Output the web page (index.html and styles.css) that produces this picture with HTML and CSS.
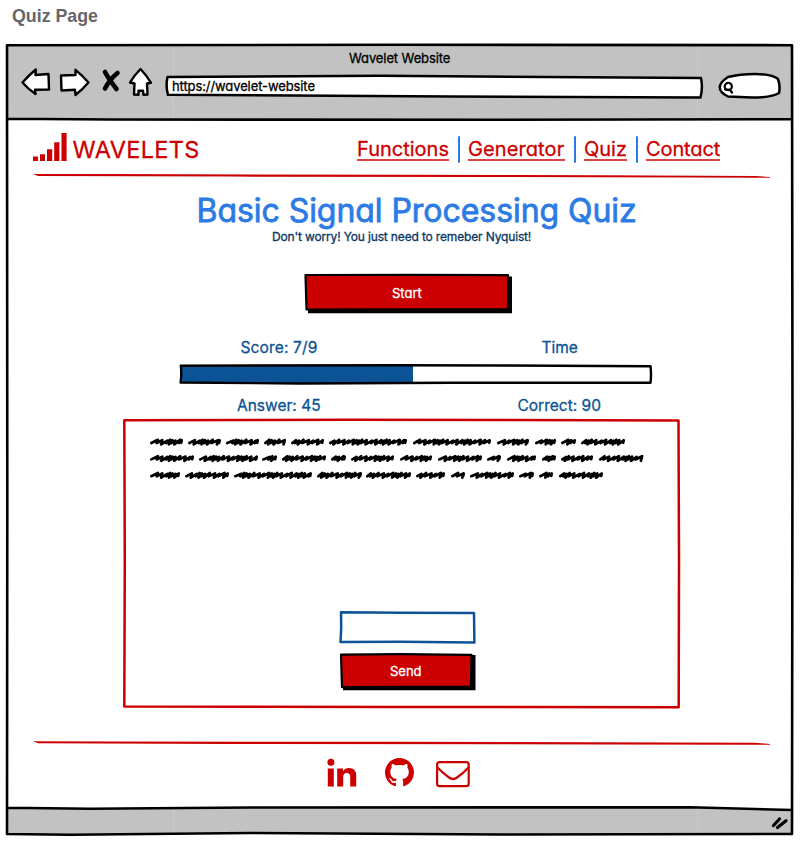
FILE: index.html
```html
<!DOCTYPE html>
<html lang="en">
<head>
<meta charset="utf-8">
<title>Quiz Page</title>
<link rel="stylesheet" href="styles.css">
</head>
<body>
<h2 class="page-label">Quiz Page</h2>
<div class="window">
  <svg class="frame" viewBox="6 44 788 792" aria-hidden="true">
    <path class="chrome" d="M8 45H792V119.500L480 120L8 119ZM8 808L250 808L700 807L792 810V834H8Z"/>
    <path class="seam" d="M173.500 46V118M697.500 46V118M173.500 809V832M697.500 809V832"/>
    <path class="ink" d="M7 45.200L400 44.800L792 45.200L792.500 420L792 834L500 834.500L250 833L70 834.800L7 834L7.300 500ZM7 118.800L110 119.500L480 119.800L792 119.200M7 807.800L90 808.800L250 807.500L690 807.300L792 810"/>
  </svg>
  <header class="chrome-bar">
    <div class="window-title">Wavelet Website</div>
    <div class="toolbar">
      <svg class="tools" viewBox="20 64 136 36" aria-hidden="true">
        <path class="tool" d="M22.500 82.500Q29 75 35.800 69.500L35.500 75L48.500 74L49 89.500L35 89.800L35.500 94Q28 89 22.500 82.500ZM61 75.500L75.500 75L75.500 69.800Q83 76 88.500 82.500Q83 89 75.500 95L75 89.800L61.500 90.500ZM140.500 69Q147 76 151 82.800L147 83.500L147.500 94.500L143.500 94.800L143 90.800L138.500 90.800L138.500 94.800L134 94.500L134.500 83.500L130 82.500Q134.500 75 140.500 69Z"/>
        <path class="cross" d="M105 72Q108 78 116.500 89M117.500 73Q110 79 105 88.500"/>
      </svg>
      <div class="address">
        <svg class="sketch" viewBox="165 75 539 24" aria-hidden="true"><path class="field" d="M167.500 77L380 75.800L701 78Q703 88 700.500 97.500L450 96.500L168 94.800Q165.500 86 167.500 77Z"/></svg>
        <span class="url">https://wavelet-website</span>
      </div>
      <svg class="search" viewBox="718 72 64 28" aria-hidden="true">
        <path class="field" d="M728 77Q740 74 755 74Q772 74 778 79Q780.500 86 779 93Q772 97.500 752 97.500L728 96.500Q711.500 88 728 77Z"/>
        <circle class="lens" cx="728.300" cy="86.500" r="3.600"/><path class="lens" d="M725 89.500L730 89.800L732 92.500"/>
      </svg>
    </div>
  </header>
  <div class="site">
    <div class="masthead">
      <a class="brand">
        <svg class="bars" viewBox="33 132 34 30" aria-hidden="true"><path d="M33 156.500H38V161H33ZM40 154.300H45V161H40ZM47 149.300H52.200V161H47ZM54.200 142.200H59.400V161H54.200ZM61.500 133H66.600V161H61.500Z"/></svg>
        <span class="brand-name">WAVELETS</span>
      </a>
      <nav class="nav">
        <a class="functions">Functions</a><a class="generator">Generator</a><a class="quiz">Quiz</a><a class="contact">Contact</a>
      </nav>
    </div>
    <svg class="rule" viewBox="33 173 738 6" aria-hidden="true"><path d="M33 174L110 174L400 174.800L600 175.300L755 176L770 177V177.800L690 177.500L500 177L230 176.600L38 176Z"/></svg>
    <main class="main">
      <h1 class="heading">Basic Signal Processing Quiz</h1>
      <p class="lead">Don't worry! You just need to remeber Nyquist!</p>
      <button class="button start">
        <svg class="sketch" viewBox="304 273 209 41" aria-hidden="true"><path class="shade" d="M308 276.500H512V313.200H308Z"/><path class="face" d="M305.500 275L410 274.800L508 275.200L508 309L306.500 309.500Z"/></svg>
        <span class="start-text">Start</span>
      </button>
      <div class="stats"><span class="score">Score: 7/9</span><span class="time">Time</span></div>
      <div class="progress">
        <svg class="sketch" viewBox="179 364 473 21" aria-hidden="true"><path class="fill" d="M181 366H413V383H181Z"/><path class="track" d="M180.800 365.700L400 365.300L500 365.500L650.500 366.200Q651.500 375 650.500 382.800L450 382.800L300 383.500L180.600 382.500Q181.800 374 180.800 365.700Z"/></svg>
      </div>
      <div class="stats second"><span class="answer">Answer: 45</span><span class="correct">Correct: 90</span></div>
      <section class="question">
        <svg class="sketch" viewBox="123 418 557 291" aria-hidden="true"><path class="red-line" d="M124.300 420.200L350 419.700L678.500 420.500L679 560L678.700 707.300L400 707L124.300 706.500L124.800 560Z"/><g class="scribble" id="scribble"></g></svg>
        <form class="form">
          <div class="input"><svg class="sketch" viewBox="339 611 137 33" aria-hidden="true"><path class="blue-line" d="M341 612.200L400 612.800L474 613L474.400 642.500L400 641.800L340.500 642L341.200 628Z"/></svg></div>
          <button class="button send" type="button">
            <svg class="sketch" viewBox="339 652 137 39" aria-hidden="true"><path class="shade" d="M343 655H475.500V690.300H343Z"/><path class="face" d="M341 654.600L400 654.200L471.500 654.800L471 686.500L342 687.200Z"/></svg>
            <span class="send-text">Send</span>
          </button>
        </form>
      </section>
    </main>
    <svg class="rule lower" viewBox="33 740 738 6" aria-hidden="true"><path d="M33 741.300L110 741.500L400 741.800L755 742.800L770 744V744.700L600 744.400L230 744L38 743.200Z"/></svg>
    <footer class="social">
      <svg class="linkedin" viewBox="327 758 30 30" aria-hidden="true"><circle cx="330.900" cy="762.300" r="3.500"/><path d="M327.800 768.500H333.800V786.500H327.800ZM337.200 768.500H343V771Q345 768 349 768Q356.200 768 356.200 776V786.500H350.200V777Q350.200 773 346.800 773Q343.200 773 343.200 777V786.500H337.200Z"/></svg>
      <svg class="github" viewBox="0 0 16 16" aria-hidden="true"><path d="M8 0C3.580 0 0 3.580 0 8c0 3.540 2.290 6.530 5.470 7.590.4.070.55-.17.55-.38 0-.19-.01-.82-.01-1.490-2.010.37-2.530-.49-2.690-.94-.09-.23-.48-.94-.82-1.130-.28-.15-.68-.52-.01-.53.63-.01 1.080.58 1.230.82.72 1.210 1.870.87 2.330.66.07-.52.28-.87.51-1.070-1.780-.2-3.640-.89-3.640-3.950 0-.87.31-1.590.82-2.150-.08-.2-.36-1.020.08-2.120 0 0 .67-.21 2.200.82.64-.18 1.320-.27 2-.27s1.360.09 2 .27c1.530-1.040 2.200-.82 2.200-.82.44 1.100.16 1.920.08 2.120.51.56.82 1.270.82 2.150 0 3.070-1.870 3.750-3.650 3.950.29.25.54.73.54 1.480 0 1.070-.01 1.930-.01 2.200 0 .21.15.46.55.38A8.010 8.010 0 0 0 16 8c0-4.420-3.580-8-8-8z"/></svg>
      <svg class="mail" viewBox="435 760 36 28" aria-hidden="true"><rect x="437.100" y="762.200" width="31.600" height="24" rx="2.500"/><path d="M437.500 767.500Q444 774 449 777.500Q453 780.500 457 777.500Q463 773.500 468.500 767.500"/></svg>
    </footer>
  </div>
  <div class="status-bar"><svg class="grip" viewBox="770 814 20 18" aria-hidden="true"><path d="M773.500 825.500L779.500 819M777.500 827.500L786 820.800"/></svg></div>
</div>
<script src="scribble.js"></script>
</body>
</html>
```
FILE: styles.css
```css
* { box-sizing: border-box; }
body { margin: 0; height: 844px; background: #fff; font-family: Inter, "Liberation Sans", sans-serif; font-feature-settings: "cv11"; font-weight: 400; overflow: hidden; }
svg { display: block; overflow: visible; }
path { stroke-linejoin: round; stroke-linecap: round; }
.page-label { margin: 0; padding: 6px 0 0 12px; height: 44px; font: bold 17.800px/20px "Liberation Sans", sans-serif; color: #666; }
.window { position: relative; width: 788px; height: 792px; margin-left: 6px; display: flex; flex-direction: column; -webkit-text-stroke: 0.300px currentColor; }
.frame { position: absolute; inset: 0; width: 788px; height: 792px; }
.chrome { fill: #c2c2c2; }
.seam { stroke: #cacaca; stroke-width: 1; }
.ink { fill: none; stroke: #000; stroke-width: 2.600; }
.chrome-bar, .site, .status-bar { position: relative; }
.chrome-bar { height: 76px; padding-top: 4px; color: #000; }
.window-title { height: 16px; line-height: 20px; padding-left: 343px; font-size: 13px; letter-spacing: -0.100px; white-space: nowrap; }
.toolbar { display: flex; padding-left: 14px; }
.tools { width: 136px; height: 36px; }
.tool { fill: #fff; stroke: #000; stroke-width: 2.400; }
.cross { fill: none; stroke: #000; stroke-width: 4.600; }
.field { fill: #fff; stroke: #000; stroke-width: 2.500; }
.address { display: grid; width: 539px; height: 24px; margin: 11px 14px 0 9px; }
.address > *, .button > * { grid-area: 1 / 1; }
.sketch { width: 100%; height: 100%; }
.url { position: relative; padding-left: 7px; font-size: 13px; line-height: 22px; letter-spacing: -0.100px; }
.search { width: 64px; height: 28px; margin-top: 8px; }
.lens { fill: none; stroke: #000; stroke-width: 2.200; }
.site { height: 688px; padding: 12px 24px 0 27px; }
.masthead { display: flex; height: 41px; color: #c00; }
.brand { display: flex; width: 324px; }
.bars { width: 34px; height: 30px; fill: #c00; }
.brand-name { margin-left: 5.500px; font-size: 23.500px; line-height: 35px; letter-spacing: 0.350px; }
.nav { display: flex; height: 32px; padding-top: 4px; font-size: 20px; line-height: 26px; }
.nav a { display: block; height: 25px; margin-right: 19px; border-bottom: 2px solid #da4545; position: relative; white-space: nowrap; }
.nav a + a::before { content: ""; position: absolute; left: -10px; top: 0; width: 2px; height: 27px; border-radius: 1px; background: #2c7be5; }
.functions { width: 92px; }
.generator { width: 97px; letter-spacing: 0.100px; }
.quiz { width: 43px; }
.contact { width: 74px; letter-spacing: -0.100px; }
.rule { width: 738px; height: 6px; fill: #c00; }
.main { height: 561px; display: flex; flex-direction: column; }
.heading { margin: 10px 0 0 163.500px; font-size: 32px; font-weight: 400; line-height: 44px; height: 38px; color: #2c7be5; white-space: nowrap; letter-spacing: -0.050px; -webkit-text-stroke-width: 0.800px; }
.lead { margin: 0 0 0 239px; height: 46px; line-height: 20px; font-size: 12px; letter-spacing: -0.150px; color: #073763; white-space: nowrap; }
.button { display: grid; padding: 0; border: 0; background: none; color: #fff; font: inherit; font-size: 13px; text-align: left; }
.shade { fill: #000; }
.face { fill: #c00; stroke: #000; stroke-width: 2.200; }
.start { width: 209px; height: 41px; margin-left: 271px; }
.start-text { position: relative; padding-left: 88px; line-height: 40px; }
.send { width: 137px; height: 39px; margin-top: 8px; }
.send-text { position: relative; padding-left: 51px; line-height: 38px; }
.stats { display: flex; height: 24px; margin-top: 26px; line-height: 16px; font-size: 15.500px; color: #0b5394; white-space: nowrap; }
.stats.second { margin-top: 12px; height: 21px; line-height: 17px; }
.score { width: 301px; margin-left: 207.500px; letter-spacing: 0.150px; }
.answer { width: 280.500px; margin-left: 204px; }
.progress { width: 473px; height: 21px; margin-left: 146px; }
.fill { fill: #0b5394; }
.track { fill: none; stroke: #000; stroke-width: 2.400; }
.question { display: grid; width: 557px; height: 291px; margin-left: 90px; }
.question > * { grid-area: 1 / 1; }
.red-line { fill: none; stroke: #c00; stroke-width: 2.500; }
.blue-line { fill: none; stroke: #0b5394; stroke-width: 2.500; }
.scribble { fill: none; stroke: #000; stroke-width: 2.700; }
.form { position: relative; padding: 193px 0 0 216px; }
.input { width: 137px; height: 33px; }
.social { display: flex; padding-top: 12px; margin-left: 294px; fill: #c00; }
.linkedin { width: 30px; height: 30px; }
.github { width: 29px; height: 29px; margin-left: 28px; }
.mail { width: 36px; height: 28px; margin: 2px 0 0 21px; fill: none; stroke: #c00; stroke-width: 2.200; }
.status-bar { height: 28px; display: flex; justify-content: flex-end; padding: 6px 4px 0 0; }
.grip { width: 20px; height: 18px; fill: none; stroke: #000; stroke-width: 3.200; }
```
FILE: scribble.js
```js
// Each pair is the start and end of one scribbled word.
const lines = [
  [441.8, [150,183,188,221,226,259,264,286,291,324,329,407,413,491,497,529,535,556,561,576,581,625]],
  [458.2, [150,194,199,258,262,277,282,326,331,346,351,394,400,432,438,482,487,501,507,536,542,556,561,593,599,643]],
  [475, [150,180,185,229,234,312,317,362,366,411,416,445,451,465,470,514,519,534,539,553,559,603]]
];
const group = document.getElementById("scribble");
for (const [y, words] of lines) {
  for (let i = 0; i < words.length; i += 2) {
    const end = words[i + 1] - 1.3;
    let x = words[i] + 1.3, k = i / 2, d = `M${x} ${y + 1.2}`;
    while (x + 6 < end) {
      const step = [6.6, 5.6, 6.2, 4, 3.6, 4.2, 5.8][k % 7];
      d += `L${x + step} ${y - 2 + (k % 3) * 0.4}L${x + step - 1.2} ${y + 1.3 + (k % 2) * 1.3}`;
      x += step - 1.2;
      k++;
    }
    d += `L${end} ${y - 1.5}L${end - 0.5} ${y + 1}`;
    const path = document.createElementNS("http://www.w3.org/2000/svg", "path");
    path.setAttribute("d", d);
    group.appendChild(path);
  }
}
```
